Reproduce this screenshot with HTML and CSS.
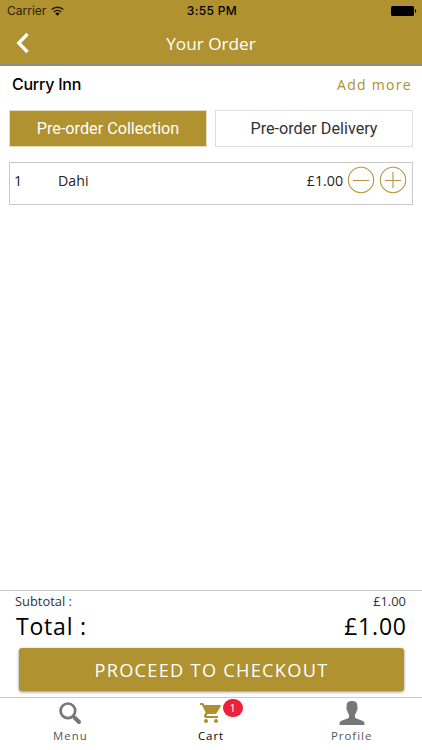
FILE: index.html
```
<!DOCTYPE html>
<html lang="en">
<head>
<meta charset="utf-8">
<title>Your Order</title>
<link rel="stylesheet" href="styles.css">
</head>
<body>
<div class="app">
  <header class="top">
    <div class="status">
      <div class="carrier"><span>Carrier</span>
        <svg width="13" height="10" viewBox="0 0 13 10"><g fill="none" stroke="#1a1505" stroke-width="1.4"><path d="M.7 3.600a8.300 8.300 0 0 1 11.600 0"/><path d="M2.800 5.900a5.300 5.300 0 0 1 7.400 0"/></g><path d="M4.400 7.600a3 3 0 0 1 4.200 0L6.500 9.800z"/></svg>
      </div>
      <span class="time">3:55 PM</span>
      <svg class="battery" width="26" height="10" viewBox="0 0 26 10"><rect width="23" height="10" rx="1.5"/><path d="M24 3h.5Q26 5 24.500 7H24z"/></svg>
    </div>
    <div class="nav">
      <svg class="back" width="14" height="22" viewBox="0 0 14 22"><path d="M11.500 2 2.700 11l8.800 9" fill="none" stroke="#fff" stroke-width="3.300"/></svg>
      <h1>Your Order</h1>
    </div>
  </header>
  <main>
    <div class="shop"><h2>Curry Inn</h2><a>Add more</a></div>
    <div class="tabs"><div class="tab active"><span>Pre-order Collection</span></div><div class="tab"><span>Pre-order Delivery</span></div></div>
    <div class="item">
      <span class="qty">1</span><span class="name">Dahi</span><span class="price">£1.00</span>
      <svg width="28" height="28" viewBox="0 0 28 28"><g fill="none" stroke="#b3963c" stroke-width="1.100"><circle cx="14" cy="14" r="12.700"/><path d="M6 14.500h16"/></g></svg>
      <svg class="plus" width="28" height="28" viewBox="0 0 28 28"><g fill="none" stroke="#b3963c" stroke-width="1.100"><circle cx="14" cy="14" r="12.700"/><path d="M6 14.500h16M14 6v16"/></g></svg>
    </div>
  </main>
  <section class="summary">
    <div class="subtotal"><span>Subtotal :</span><span>£1.00</span></div>
    <div class="total"><span>Total :</span><span class="sum">£1.00</span></div>
    <button><span>PROCEED TO CHECKOUT</span></button>
  </section>
  <nav class="bottom">
    <div class="link"><svg width="24" height="24" viewBox="0 0 24 24"><g fill="none" stroke="#777"><circle cx="9.900" cy="9.800" r="7.300" stroke-width="2.700"/><path d="m15 15 1.500 1.500" stroke-width="2.700"/><path d="m17 17 4 4" stroke-width="4" stroke-linecap="round"/></g></svg><span>Menu</span></div>
    <div class="link current"><svg width="24" height="24" viewBox="0 0 24 24"><path fill="#ae902e" d="M7 18a2 2 0 1 0 0 4 2 2 0 0 0 0-4zM1 2v2h2l3.600 7.600L5.200 14C4.500 15.400 5.500 17 7 17h12v-2H7.400l1.100-2h7.500a2 2 0 0 0 1.700-1L21.700 5.500A1 1 0 0 0 20.800 4H5.200l-.9-2zm16 16a2 2 0 1 0 0 4 2 2 0 0 0 0-4z"/></svg><span>Cart</span><b class="badge">1</b></div>
    <div class="link"><svg width="26" height="24" viewBox="0 0 26 24"><path fill="#777" d="M13 0c4 0 5.800 2 5.300 6 .7.200.5 2.500-.6 3.700-.3 1.700-.8 2.800-1.700 3.800v2.700c1 1.800 7 2.600 8.700 4.300.7.700.8 2 .8 3.500H.5c0-1.500.1-2.800.8-3.500C3 18.800 9 18 10 16.200v-2.700C9.100 12.500 8.600 11.400 8.300 9.700 7.200 8.500 7 6.200 7.700 6 7.200 2 9 0 13 0z"/></svg><span>Profile</span></div>
  </nav>
</div>
</body>
</html>
```
FILE: styles.css
```
* { box-sizing: border-box; }
body { margin: 0; font-family: "Open Sans", sans-serif; color: #222; background: #fff; }
.app { width: 422px; height: 750px; display: flex; flex-direction: column; overflow: hidden; }
.top { height: 66px; flex: none; background: #b09330; border-bottom: 2px solid #918b85; }
.status { height: 22px; display: grid; grid-template-columns: 1fr auto 1fr; align-items: center; padding: 0 5px 0 7px; font: 12px/22px Inter, sans-serif; color: #000; }
.carrier { display: flex; align-items: center; gap: 5px; color: #2b230b; }
.carrier svg { margin-top: -1px; }
.time { font-weight: 500; letter-spacing: .35px; }
.battery { justify-self: end; }
.nav { height: 43px; display: grid; grid-template-columns: 14px 1fr 14px; align-items: center; padding: 0 16px; }
.back { margin-top: -2px; }
h1 { margin: 0; font-size: 17.2px; font-weight: 400; color: #fff; text-align: center; }
main { flex: 1; padding: 0 9px; }
.shop { height: 44px; padding: 0 1px 0 3px; display: flex; justify-content: space-between; align-items: center; margin-top: -4px; }
.shop h2 { margin: 0; font: 500 16px Inter, sans-serif; letter-spacing: -.25px; color: #000; }
.shop a { color: #ae902e; font-size: 14px; letter-spacing: 1.3px; }
.tabs { display: grid; grid-template-columns: 198px 198px; gap: 8px; margin: 4px 0 0; }
.tab { height: 37px; border: 1px solid #ddd; text-align: center; font: 16.2px/35px Roboto, sans-serif; color: #333; }
.tab.active { background: #b09330; color: #fff; border-color: #e5dcbd; }
.item { height: 43px; border: 1px solid #c8c8c8; margin: 15px 0 0; display: flex; align-items: center; padding: 0 5px 7px 4px; font-size: 14.2px; width: 404px; }
.qty { width: 44px; }
.name { flex: 1; }
.price { margin-right: 4px; }
.plus { margin-left: 4px; }
.summary { height: 107px; border-top: 1px solid #ccc; padding: 0 16px 0 15px; }
.subtotal, .total { display: flex; justify-content: space-between; }
.subtotal { font-size: 12.9px; line-height: 21px; color: #333; }
.total { font-size: 23px; line-height: 28px; letter-spacing: .8px; color: #000; padding-left: 1px; }
.sum { margin-right: -.8px; }
button { display: block; width: 385px; height: 43px; margin: 8px 0 0 4px; padding: 0; border: 0; border-radius: 3px; background: #b09330; color: #fff; font: 18.2px "Open Sans", sans-serif; letter-spacing: 1.28px; box-shadow: 0 1px 3px #0007; }
.bottom { height: 53px; border-top: 1px solid #ccc; display: grid; grid-template-columns: repeat(3, 1fr); }
.link { position: relative; display: flex; flex-direction: column; align-items: center; font-size: 11.4px; letter-spacing: 1px; color: #555; padding-top: 3px; }
.link span { line-height: 21px; }
.current { color: #000; }
.badge { position: absolute; left: 82px; top: 1px; width: 20px; height: 18px; border-radius: 9px; background: #ec213a; color: #fff; font-size: 11px; line-height: 18px; text-align: center; font-weight: 400; letter-spacing: 0; }
```
